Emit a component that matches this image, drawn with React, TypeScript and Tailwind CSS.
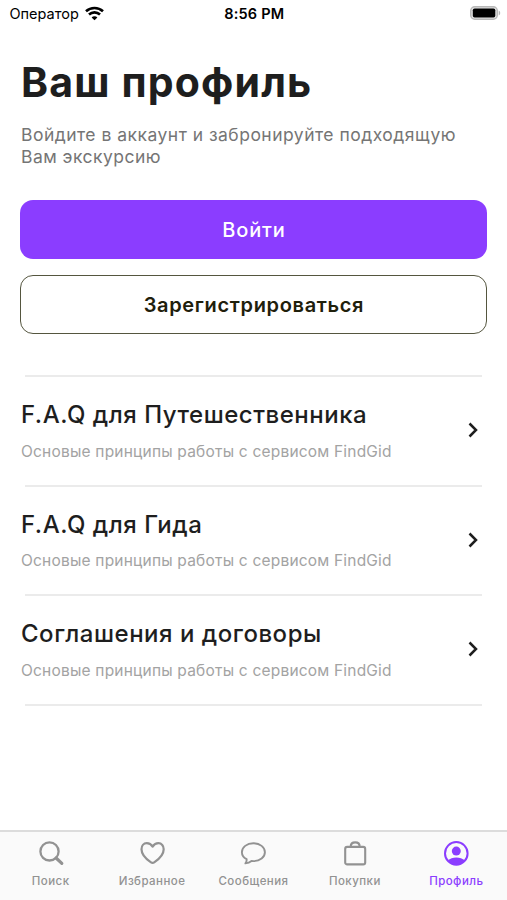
import React from "react";

const sections = [
  {
    title: "F.A.Q для Путешественника",
    text: "Основые принципы работы с сервисом FindGid",
  },
  {
    title: "F.A.Q для Гида",
    text: "Основые принципы работы с сервисом FindGid",
  },
  {
    title: "Соглашения и договоры",
    text: "Основые принципы работы с сервисом FindGid",
  },
];

const SearchIcon = () => (
  <svg width="28" height="28" viewBox="0 0 28 28" fill="none" stroke="currentColor">
    <circle cx="12.5" cy="11.4" r="9.1" strokeWidth="2.3" />
    <path d="M19.1 18l5.7 5.4" strokeWidth="3.2" strokeLinecap="round" />
  </svg>
);

const HeartIcon = () => (
  <svg width="28" height="28" viewBox="0 0 28 28" fill="none" stroke="currentColor" strokeWidth="2.2" strokeLinejoin="round">
    <path d="M14.6 6.6C13.1 4.2 11 3.2 8.8 3.2 5.6 3.2 3.5 5.800 3.500 9.200c0 5.200 4.500 9.800 9.500 13.200 1.100.8 2.100.8 3.200 0 5-3.400 9.500-8 9.500-13.200 0-3.400-2.100-6-5.300-6-2.200 0-4.300 1-5.800 3.400z" />
  </svg>
);

const ChatIcon = () => (
  <svg width="28" height="28" viewBox="0 0 28 28" fill="none" stroke="currentColor" strokeWidth="1.9" strokeLinejoin="round">
    <path d="M14.400 3.300c6.600 0 11.500 3.900 11.500 8.900s-4.900 8.900-11.500 8.900c-.7 0-1.300 0-1.900-.1-1.600 1.400-3.600 2.200-6.100 2.400 1-1.200 1.400-2.600 1.200-4.200-2.900-1.600-4.700-4.100-4.700-7C2.900 7.200 7.800 3.300 14.400 3.300z" />
  </svg>
);

const BagIcon = () => (
  <svg width="28" height="28" viewBox="0 0 28 28" fill="none" stroke="currentColor" strokeWidth="2.1">
    <rect x="4.2" y="6.900" width="20" height="17.500" rx="2" />
    <path d="M9.700 6.800c0-2.700 1.900-4.400 4.500-4.400s4.500 1.700 4.500 4.400" />
  </svg>
);

const ProfileIcon = () => (
  <svg width="28" height="28" viewBox="0 0 28 28" fill="currentColor">
    <circle cx="14.3" cy="13.400" r="11.300" fill="none" stroke="currentColor" strokeWidth="2" />
    <circle cx="14.3" cy="11.100" r="4.500" />
    <path d="M6 20.600c1.900-2.100 4.900-3.200 8.300-3.200s6.400 1.100 8.300 3.200c-1.900 2.600-4.900 4.300-8.300 4.300s-6.400-1.700-8.300-4.300z" />
  </svg>
);

const tabs = [
  { label: "Поиск", icon: <SearchIcon />, active: false },
  { label: "Избранное", icon: <HeartIcon />, active: false },
  { label: "Сообщения", icon: <ChatIcon />, active: false },
  { label: "Покупки", icon: <BagIcon />, active: false },
  { label: "Профиль", icon: <ProfileIcon />, active: true },
];

const StatusBar = () => (
  <div className="grid h-7 grid-cols-3 items-center pl-[9.500px] pr-[6px] text-[14.5px] text-black">
    <div className="flex items-center gap-[6px]">
      <span>Оператор</span>
      <svg width="19" height="15" viewBox="0 0 19 15" fill="none" stroke="#000" strokeWidth="2.600" className="mb-[2px]">
        <path d="M1 5.300c4.800-4.500 12.200-4.500 17 0" />
        <path d="M4 8.500c3.100-2.900 7.900-2.900 11 0" />
        <path d="M9.500 14.300l-2.900-2.900c1.600-1.500 4.200-1.500 5.800 0z" fill="#000" stroke="none" />
      </svg>
    </div>
    <span className="pr-[2px] text-center font-semibold tracking-[0.2px]">8:56 PM</span>
    <svg className="mb-[2px] justify-self-end" width="31" height="14" viewBox="0 0 31 14">
      <rect x=".75" y=".75" width="26.500" height="12.500" rx="4" fill="#e4e4e4" stroke="#b8b8b8" strokeWidth="1.500" />
      <rect x="2.800" y="2.500" width="22.500" height="9" rx="1.800" fill="#000" />
      <path d="M28.700 4.500c2 .9 2 4.100 0 5z" fill="#b5b5b5" />
    </svg>
  </div>
);

export default function App() {
  return (
    <div className="flex h-[900px] w-[507px] flex-col overflow-hidden bg-white font-['Inter',sans-serif]">
      <StatusBar />

      {/* Header */}
      <div className="px-[21px] pt-[30px]">
        <h1 className="text-[41px] leading-[48px] font-bold tracking-[1.150px] text-[#1e1e1e]">Ваш профиль</h1>
        <p className="mt-[18px] text-[17.500px] leading-[22px] tracking-[0.480px] text-[#757575]">
          Войдите в аккаунт и забронируйте подходящую
          <br />
          Вам экскурсию
        </p>
      </div>

      {/* Buttons */}
      <div className="flex flex-col gap-4 pt-[32px] pr-[19.600px] pl-[20.400px]">
        <button className="h-[59px] rounded-[13px] bg-[#8b3dff] text-[20px] font-medium tracking-[0.8px] text-white">
          Войти
        </button>
        <button className="h-[59px] rounded-[13px] border-[1.500px] border-[#55563f] text-[20px] font-semibold tracking-[0.650px] text-[#1f200c]">
          Зарегистрироваться
        </button>
      </div>

      {/* Links */}
      <div className="mt-[41px] flex flex-col">
        <div className="mx-[25px] h-[2px] bg-[#ebebeb]" />
        {sections.map((item) => (
          <div key={item.title}>
            <div className="flex h-[107.500px] items-center justify-between pl-[21px] pr-[28px]">
              <div>
                <h2 className="text-[24px] leading-[30px] font-medium tracking-[0.520px] text-[#1e1e1e]">{item.title}</h2>
                <p className="mt-[11.500px] text-[15.500px] leading-5 tracking-[0.200px] text-[#a3a3a3]">{item.text}</p>
              </div>
              <svg width="12" height="16" viewBox="0 0 12 16" fill="none" stroke="#1e1e1e" strokeWidth="2.500" className="mb-[1px]">
                <path d="M2.500 1.500L9 8l-6.500 6.500" />
              </svg>
            </div>
            <div className="mx-[25px] h-[2px] bg-[#ebebeb]" />
          </div>
        ))}
      </div>

      {/* Tab bar */}
      <div className="mt-auto grid h-[70px] grid-cols-5 border-t-2 border-[#dcdcdc] bg-[#fafafa] pt-[8px]">
        {tabs.map((tab) => (
          <div
            key={tab.label}
            className={`flex flex-col items-center ${tab.active ? "text-[#8b3dff]" : "text-[#929292]"}`}
          >
            {tab.icon}
            <span className="mt-[5px] text-[11.500px] leading-4 font-medium tracking-[0.450px] whitespace-nowrap">{tab.label}</span>
          </div>
        ))}
      </div>
    </div>
  );
}
